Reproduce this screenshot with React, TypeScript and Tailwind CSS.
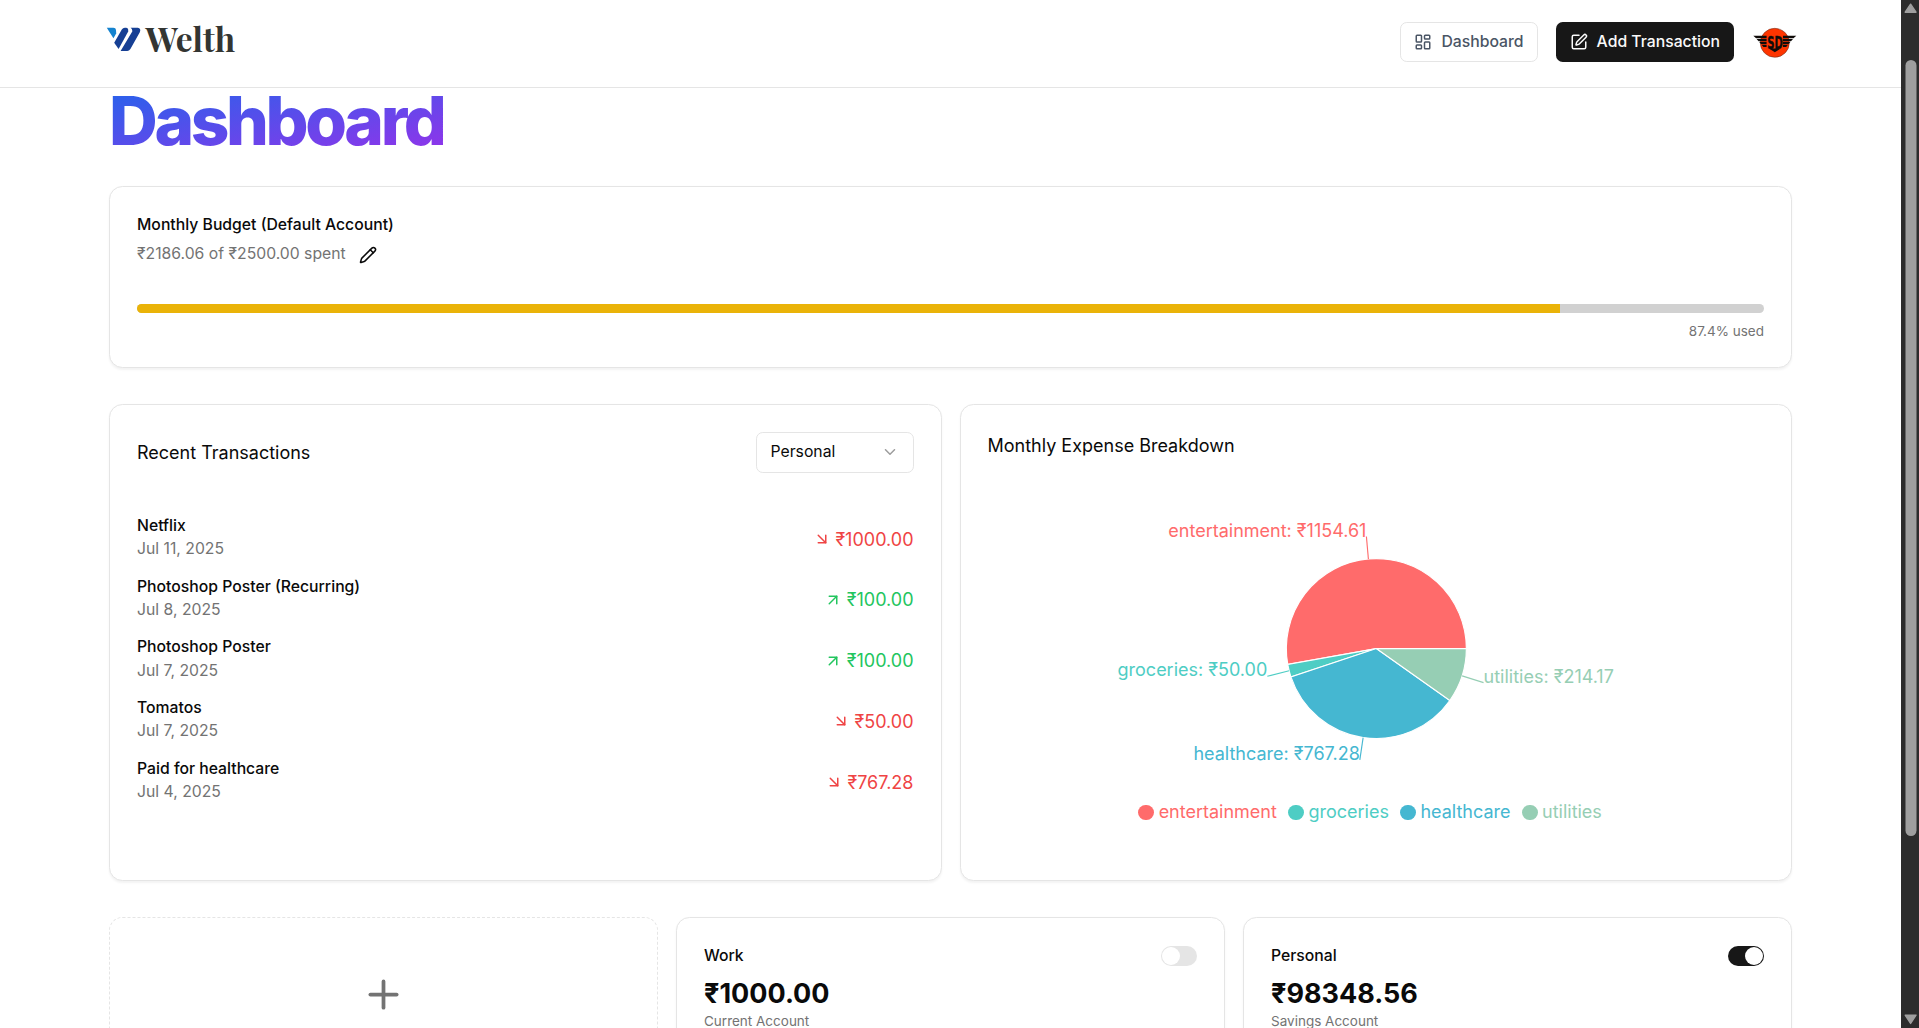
import React from "react";
import {
  ArrowDownRight,
  ArrowUpRight,
  ChevronDown,
  LayoutDashboard,
  Pencil,
  Plus,
  SquarePen,
} from "lucide-react";

const transactions = [
  { name: "Netflix", date: "Jul 11, 2025", amount: "₹1000.00", income: false },
  { name: "Photoshop Poster (Recurring)", date: "Jul 8, 2025", amount: "₹100.00", income: true },
  { name: "Photoshop Poster", date: "Jul 7, 2025", amount: "₹100.00", income: true },
  { name: "Tomatos", date: "Jul 7, 2025", amount: "₹50.00", income: false },
  { name: "Paid for healthcare", date: "Jul 4, 2025", amount: "₹767.28", income: false },
];

const expenses = [
  { name: "entertainment", value: 1154.61, color: "#FF6B6B" },
  { name: "groceries", value: 50, color: "#4ECDC4" },
  { name: "healthcare", value: 767.28, color: "#45B7D1" },
  { name: "utilities", value: 214.17, color: "#96CEB4" },
];

const CARD = "rounded-xl border border-[#e5e5e5] bg-white shadow-xs";

function polar(radius: number, degrees: number) {
  const a = (degrees * Math.PI) / 180;
  return { x: radius * Math.cos(a), y: -radius * Math.sin(a) };
}

function Logo() {
  return (
    <svg width="124" height="40" viewBox="0 0 139.5 45" className="mt-[2px] overflow-visible" aria-label="Welth">
      <g transform="translate(-0.6 0)">
        <path d="M2.4 8.8H9q2.4 0 2.6 2.2l.2 3.4L9 19.2z" fill="#1583cf" />
        <path d="M9.8 23.8 17.4 10.6Q18.5 8.8 20.4 8.8h1.2q2.6.2 2.2 3.6L14.2 30z" fill="#163f94" />
        <path d="M16.2 31.9 28 12.2Q27.8 9.8 26.2 8.8h7.2q3.6.6 2 4.4L26 30Q24.8 31.9 22.8 31.9z" fill="#163f94" />
      </g>
      <text
        x="40.6"
        y="33.2"
        fontFamily="'Playfair Display', 'Liberation Serif', serif"
        fontWeight="700"
        fontSize="33"
        textLength="89.5"
        lengthAdjust="spacingAndGlyphs"
        fill="#333532"
      >
        Welth
      </text>
    </svg>
  );
}

function Wing() {
  return <path d="M1.3 13.7H14.6v2.5H4.1zM4.6 17H14.6v2.2H6.6zM7.2 20H14.6v2H9zM9.6 22.8H14.6v2.2H11.4z" fill="#100c0a" />;
}

function Avatar() {
  return (
    <svg width="40" height="36" viewBox="0 0 45 40.5" aria-label="Profile">
      <circle cx="22.8" cy="20.8" r="14.5" fill="#fe3500" stroke="#5a2a1c" strokeWidth="0.5" />
      <Wing />
      <g transform="translate(45.6 0) scale(-1 1)">
        <Wing />
      </g>
      <path d="M17 26.6H28.6L22.8 30.2z" fill="#100c0a" />
      <text
        x="15.2"
        y="26.8"
        fontFamily="'DejaVu Sans Condensed', 'DejaVu Sans', sans-serif"
        fontWeight="700"
        fontSize="18.5"
        textLength="15.6"
        lengthAdjust="spacingAndGlyphs"
        fill="#100c0a"
        stroke="#100c0a"
        strokeWidth="0.4"
      >
        SD
      </text>
    </svg>
  );
}

function Header() {
  return (
    <header className="relative z-10 h-[78px] border-b border-[#e5e5e5] bg-white">
      <div className="mx-auto flex max-w-[1536px] items-start justify-between px-4 pt-[15px]">
        <Logo />
        <div className="mt-[4.5px] flex items-center gap-4">
          <button className="flex h-9 items-center gap-2 rounded-md border border-[#e5e5e5] bg-white px-3 text-sm font-medium text-gray-600">
            <LayoutDashboard size={16} />
            Dashboard
          </button>
          <button className="flex h-9 items-center gap-2 rounded-md bg-[#171717] px-3 text-sm font-medium text-[#fafafa]">
            <SquarePen size={16} />
            Add Transaction
          </button>
          <Avatar />
        </div>
      </div>
    </header>
  );
}

function BudgetCard() {
  return (
    <section className={`${CARD} h-[161.8px] p-6`}>
      <h2 className="text-sm leading-5 font-medium">Monthly Budget (Default Account)</h2>
      <div className="mt-[3.8px] flex h-6 items-center">
        <p className="text-sm text-[#737373]">₹2186.06 of ₹2500.00 spent</p>
        <Pencil size={16} className="mt-0.5 ml-3" />
      </div>
      <div className="mt-[32.2px] h-2 overflow-hidden rounded-full bg-[#d1d1d1]">
        <div className="h-full w-[87.44%] bg-[#eab308]" />
      </div>
      <p className="mt-[8.9px] text-right text-xs text-[#737373]">87.4% used</p>
    </section>
  );
}

function TransactionsCard() {
  return (
    <section className={`${CARD} p-6`}>
      <div className="flex h-[36.5px] items-center justify-between">
        <h2 className="text-base">Recent Transactions</h2>
        <button className="flex h-[36.5px] w-[140px] items-center justify-between rounded-md border border-[#e5e5e5] px-3 text-sm">
          Personal
          <ChevronDown size={16} className="-mt-px opacity-40" />
        </button>
      </div>
      <ul className="mt-[39.75px] flex flex-col gap-4">
        {transactions.map((t, i) => (
          <li key={i} className="flex items-center justify-between">
            <div className="flex flex-col gap-1">
              <p className="text-sm leading-none font-medium">{t.name}</p>
              <p className="text-sm text-[#737373]">{t.date}</p>
            </div>
            <div className={t.income ? "flex items-center text-[#22c55e]" : "flex items-center text-[#ef4444]"}>
              {t.income ? <ArrowUpRight size={16} className="mr-1" /> : <ArrowDownRight size={16} className="mr-1" />}
              {t.amount}
            </div>
          </li>
        ))}
      </ul>
    </section>
  );
}

function ExpensePie() {
  const total = expenses.reduce((sum, e) => sum + e.value, 0);
  let angle = 0;
  const slices = expenses.map((e) => {
    const start = angle;
    angle += (e.value / total) * 360;
    return { ...e, start, end: angle };
  });
  return (
    <svg width="690" height="270.6" className="mx-auto overflow-visible">
      <g transform="translate(345.2 137.4)">
        {slices.map((s) => {
          const a = polar(80, s.start);
          const b = polar(80, s.end);
          const large = s.end - s.start > 180 ? 1 : 0;
          return (
            <path
              key={s.name}
              d={`M0 0L${a.x} ${a.y}A80 80 0 ${large} 0 ${b.x} ${b.y}Z`}
              fill={s.color}
              stroke="#fff"
            />
          );
        })}
        {slices.map((s) => {
          const mid = (s.start + s.end) / 2;
          const a = polar(80, mid);
          const b = polar(100, mid);
          return (
            <g key={s.name}>
              <path d={`M${a.x} ${a.y}L${b.x} ${b.y}`} stroke={s.color} fill="none" />
              <text x={b.x} y={b.y} textAnchor={b.x > 0 ? "start" : "end"} fontSize="16" fill={s.color}>
                {`${s.name}: ₹${s.value.toFixed(2)}`}
              </text>
            </g>
          );
        })}
      </g>
    </svg>
  );
}

function BreakdownCard() {
  return (
    <section className={`${CARD} p-6`}>
      <h2 className="text-base">Monthly Expense Breakdown</h2>
      <div className="mt-[30.7px]">
        <ExpensePie />
        <ul className="flex justify-center gap-2.5 pr-2.5">
          {expenses.map((e) => (
            <li key={e.name} className="flex items-center gap-1" style={{ color: e.color }}>
              <span className="mt-0.5 size-3.5 rounded-full bg-current" />
              {e.name}
            </li>
          ))}
        </ul>
      </div>
    </section>
  );
}

function AccountCard({ name, balance, type, active }: { name: string; balance: string; type: string; active: boolean }) {
  return (
    <section className={`${CARD} h-[180px] p-6`}>
      <div className="flex h-5 items-center justify-between">
        <h3 className="text-sm font-medium">{name}</h3>
        <span
          className={
            active
              ? "flex h-[18px] w-8 items-center justify-end rounded-full bg-[#171717] p-px"
              : "flex h-[18px] w-8 items-center justify-start rounded-full bg-[#e5e5e5] p-px"
          }
        >
          <span className="size-4 rounded-full bg-white" />
        </span>
      </div>
      <p className="mt-2 text-2xl leading-8 font-bold">{balance}</p>
      <p className="mt-[0.5px] text-xs text-[#737373]">{type}</p>
    </section>
  );
}

function Scrollbar() {
  return (
    <aside className="flex w-[18px] shrink-0 flex-col items-center bg-[#2c2c2c]">
      <svg width="18" height="60" className="shrink-0">
        <path d="M9.6 4.2 15 12.2H4.2z" fill="#9f9f9f" stroke="#9f9f9f" strokeWidth="1.4" strokeLinejoin="round" />
      </svg>
      <div className="h-[776px] w-[11px] translate-x-[0.5px] rounded-full bg-[#9f9f9f]" />
      <svg width="18" height="18" className="mt-auto">
        <path d="M9.6 13.4 15 5.2H4.2z" fill="#9f9f9f" stroke="#9f9f9f" strokeWidth="1.4" strokeLinejoin="round" />
      </svg>
    </aside>
  );
}

export default function App() {
  return (
    <div className="flex h-screen w-screen overflow-hidden bg-white font-['Inter',sans-serif] text-[#0a0a0a]">
      <div className="min-w-0 flex-1 overflow-hidden">
        <div className="[zoom:1.125]">
          <Header />
          <main className="mx-auto max-w-[1536px] px-5">
            <h1 className="-mt-px mb-[28.3px] w-fit bg-linear-to-br/srgb from-[#2563eb] to-[#9333ea] bg-clip-text pr-0.5 text-6xl font-extrabold tracking-tighter text-transparent">
              Dashboard
            </h1>
            <div className="flex flex-col gap-8">
              <BudgetCard />
              <div className="grid h-[424px] grid-cols-2 gap-4">
                <TransactionsCard />
                <BreakdownCard />
              </div>
              <div className="grid grid-cols-3 gap-4">
                <section className="flex h-[180px] flex-col items-center rounded-xl border border-dashed border-[#e5e5e5] pt-[48px] text-[#737373]">
                  <Plus size={40} />
                </section>
                <AccountCard name="Work" balance="₹1000.00" type="Current Account" active={false} />
                <AccountCard name="Personal" balance="₹98348.56" type="Savings Account" active />
              </div>
            </div>
          </main>
        </div>
      </div>
      <Scrollbar />
    </div>
  );
}
